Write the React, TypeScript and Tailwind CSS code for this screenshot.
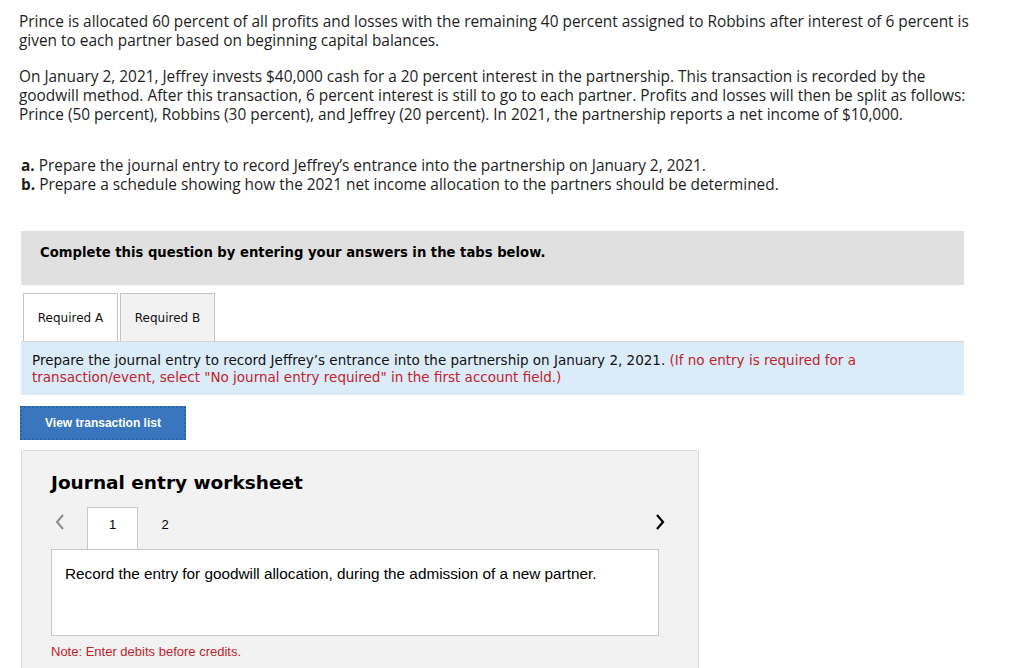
import React from "react";

export default function App() {
  return (
    <div className="w-[1024px] h-[668px] overflow-hidden bg-white text-[#1a1a1a]">
      <div className="pl-[19px] pt-[12px] text-[15.4px] leading-[19px] font-['Open_Sans',sans-serif] text-[#1e1e1e]">
        <p className="whitespace-nowrap">
          Prince is allocated 60 percent of all profits and losses with the remaining 40 percent assigned to Robbins after interest of 6 percent is
          <br />
          given to each partner based on beginning capital balances.
        </p>
        <p className="mt-[17px] whitespace-nowrap">
          On January 2, 2021, Jeffrey invests $40,000 cash for a 20 percent interest in the partnership. This transaction is recorded by the
          <br />
          goodwill method. After this transaction, 6 percent interest is still to go to each partner. Profits and losses will then be split as follows:
          <br />
          Prince (50 percent), Robbins (30 percent), and Jeffrey (20 percent). In 2021, the partnership reports a net income of $10,000.
        </p>
        <div className="mt-[32px] pl-[2px] whitespace-nowrap">
          <div>
            <span className="font-bold">a.</span> Prepare the journal entry to record Jeffrey’s entrance into the partnership on January 2, 2021.
          </div>
          <div>
            <span className="font-bold">b.</span> Prepare a schedule showing how the 2021 net income allocation to the partners should be determined.
          </div>
        </div>
      </div>

      <div className="ml-[21px] w-[943px] font-['DejaVu_Sans','Verdana',sans-serif]">
        <div className="mt-[37px] h-[54px] bg-[#e0e0e0] pl-[19px] pt-[14px] leading-[16px] text-[13.2px] font-bold text-black">
          Complete this question by entering your answers in the tabs below.
        </div>

        <div className="mt-[8px] flex gap-[2px] pl-[2px]">
          <div className="w-[95px] h-[48px] border border-b-0 border-[#c4c4c4] bg-white flex items-center justify-center text-[12px] text-[#111]">
            Required A
          </div>
          <div className="w-[95px] h-[48px] border border-b-0 border-[#c4c4c4] bg-[#f2f2f2] flex items-center justify-center text-[12px] text-[#111]">
            Required B
          </div>
        </div>

        <div className="h-[54px] bg-[#dcebf8] border-t border-[#d6d6d6] pl-[11px] pt-[10px] text-[13.5px] leading-[17px] text-[#111]">
          Prepare the journal entry to record Jeffrey’s entrance into the partnership on January 2, 2021.{" "}
          <span className="text-[#c0232b]">
            (If no entry is required for a
            <br />
            transaction/event, select "No journal entry required" in the first account field.)
          </span>
        </div>

        <div className="mt-[11px] -ml-[1px] w-[166px] h-[34px] bg-[#3a76bd] border-2 border-dotted border-[#2a66ad] flex items-center justify-center text-white text-[12px] font-bold font-['Liberation_Sans',Arial,sans-serif]">
          View transaction list
        </div>

        <div className="mt-[10px] w-[678px] h-[230px] bg-[#f2f2f2] border border-[#dcdcdc] pl-[29px] pr-[39px]">
          <div className="pt-[20px] text-[18.5px] font-bold text-black leading-[24px]">Journal entry worksheet</div>
          <div className="mt-[12px] flex h-[42px] -mr-[8px]">
            <div className="w-[36px] h-full pl-[4px] pt-[7px] text-[#8c8c8c]">
              <svg width="10" height="16" viewBox="0 0 10 16">
                <path d="M8 1 L2 8 L8 15" fill="none" stroke="currentColor" strokeWidth="2" />
              </svg>
            </div>
            <div className="w-[51px] h-[42px] bg-white border border-b-0 border-[#c8c8c8] relative z-10 -mb-[1px] pt-[7px] text-center text-[13px] font-['Liberation_Sans',Arial,sans-serif] text-black">
              1
            </div>
            <div className="w-[54px] h-full pt-[8px] text-center text-[13px] font-['Liberation_Sans',Arial,sans-serif] text-black">
              2
            </div>
            <div className="flex-1" />
            <div className="w-[12px] h-full pt-[7px] text-black">
              <svg width="10" height="16" viewBox="0 0 10 16">
                <path d="M2 1 L8 8 L2 15" fill="none" stroke="currentColor" strokeWidth="2.2" />
              </svg>
            </div>
          </div>
          <div className="w-[608px] h-[87px] bg-white border border-[#c8c8c8] pl-[13px] pt-[13px] text-[15.3px] font-['Liberation_Sans_Narrow','Liberation_Sans',sans-serif] text-black">
            Record the entry for goodwill allocation, during the admission of a new partner.
          </div>
          <div className="mt-[6px] text-[13px] text-[#c0232b] font-['Liberation_Sans_Narrow','Liberation_Sans',sans-serif]">
            Note: Enter debits before credits.
          </div>
        </div>
      </div>
    </div>
  );
}
